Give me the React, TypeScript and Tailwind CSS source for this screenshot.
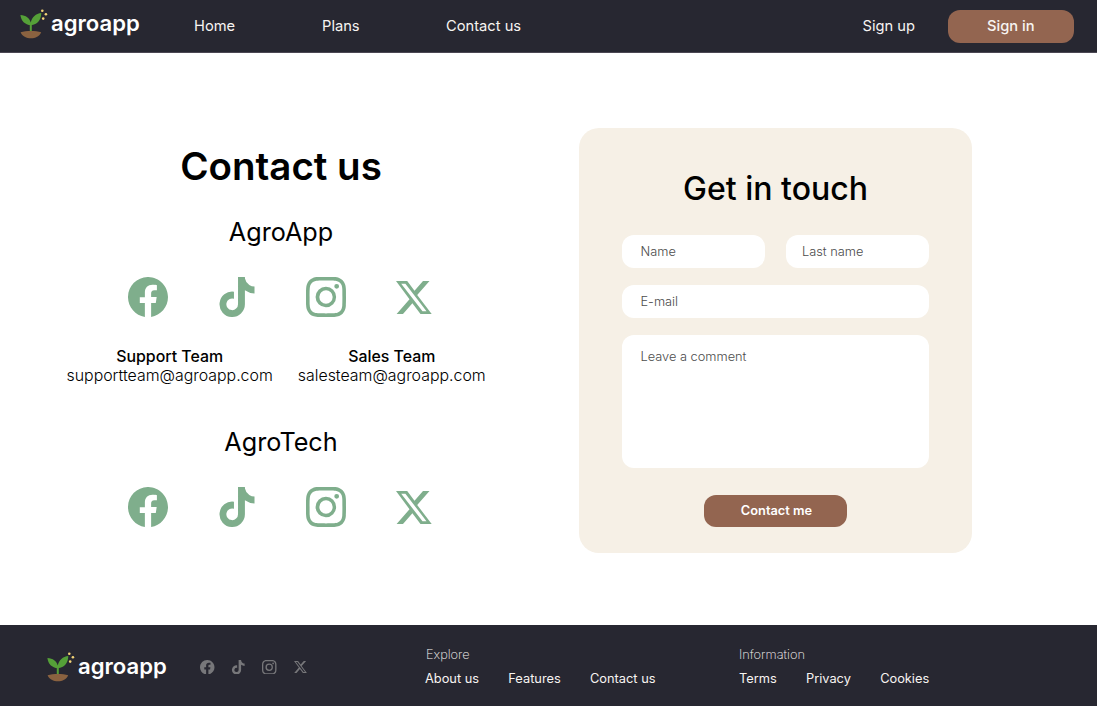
import { BsFacebook, BsInstagram } from "react-icons/bs";
import { FaTiktok } from "react-icons/fa6";

function Logo() {
  return (
    <div className="flex">
      <svg viewBox="0 0 28 30" className="mt-px h-[30px] w-[28px] shrink-0">
        <path d="M10.8 22.4V15" stroke="#55a038" strokeWidth="2" fill="none" />
        <path d="M10.9 16.2C5 15.6 1 11.8 .4 5.9c5.5 .3 9.2 3.1 10.4 7.6C12 8.2 15.8 4.5 21.3 4 21.2 10.9 17.4 15.8 10.9 16.2Z" fill="#55a038" />
        <path d="M.6 23.3C3.5 22.3 7 22 10.9 22S18.3 22.3 21.2 23.3C19.5 27.4 15.4 29.3 10.9 29.3S2.3 27.4 .6 23.3Z" fill="#8a6240" />
        <g fill="#f3d376">
          <circle cx="22.3" cy="1.7" r="1.3" />
          <circle cx="25.9" cy="5.2" r="1.3" />
          <circle cx="23.2" cy="9.6" r="1.3" />
        </g>
      </svg>
      <span className="ml-[3px] text-[22.1px] leading-[30px] font-semibold text-white">agroapp</span>
    </div>
  );
}

function XIcon({ className }: { className: string }) {
  return (
    <svg viewBox="0 0 36 33" fill="currentColor" className={className}>
      <path fillRule="evenodd" d="M0 0H11.2L18.5 9.8 27 0H33.5L21.2 14 35.7 33H24.5L16.4 22.15 7 33H.6L13.5 18.2ZM5.2 2.7 26.5 30.3H30.5L9.4 2.7Z" />
    </svg>
  );
}

function Socials() {
  return (
    <div className="ml-[128px] flex items-center text-[40px] text-[#7fae8c]">
      <BsFacebook />
      <FaTiktok className="ml-[49px]" />
      <BsInstagram className="ml-[48.5px]" />
      <XIcon className="ml-[50.5px] h-[33px] w-[36px]" />
    </div>
  );
}

const field = "h-[32.5px] rounded-[12px] bg-white text-[12.8px] font-light text-black outline-none placeholder:text-[#4c4c4c]";

export default function App() {
  return (
    <div className="flex h-[706px] w-[1097px] flex-col overflow-hidden bg-white font-['Inter',sans-serif] text-black">
      <header className="flex h-[53px] shrink-0 border-b border-[#4b4753] bg-[#272731] pl-5 text-[14.7px] text-[#f7f4f1]">
        <div className="w-[174px] pt-2"><Logo /></div>
        <nav className="flex pt-[14px] leading-6">
          <a className="w-[128px]">Home</a>
          <a className="w-[124px]">Plans</a>
          <a>Contact us</a>
        </nav>
        <div className="mr-[23.5px] ml-auto flex">
          <a className="mr-[33px] pt-[14px] leading-6">Sign up</a>
          <button className="mt-[10px] h-[32.5px] w-[125.5px] rounded-[12px] bg-[#936550] font-medium">Sign in</button>
        </div>
      </header>

      <main className="flex h-[572px] shrink-0">
        <section className="w-[579px]">
          <h1 className="mt-[89px] w-[562px] text-center text-[38.5px] leading-[48px] font-semibold">Contact us</h1>
          <h2 className="mt-[26px] w-[562px] text-center text-[25.2px] leading-8">AgroApp</h2>
          <div className="mt-[29px]"><Socials /></div>
          <div className="mt-[30px] ml-[66.5px] flex gap-[25px] text-center text-[15.9px] leading-5 font-light">
            <div>
              <h3 className="font-medium">Support Team</h3>
              <p className="-mt-px">supportteam@agroapp.com</p>
            </div>
            <div>
              <h3 className="font-medium">Sales Team</h3>
              <p className="-mt-px">salesteam@agroapp.com</p>
            </div>
          </div>
          <h2 className="mt-[40px] w-[562px] text-center text-[25.2px] leading-8">AgroTech</h2>
          <div className="mt-[29px]"><Socials /></div>
        </section>

        <form className="mt-[75px] flex h-[425px] w-[393px] flex-col rounded-[20px] bg-[#f6f0e6] px-[43px] pt-[41px]">
          <h2 className="text-center text-[32px] leading-10 font-medium">Get in touch</h2>
          <div className="mt-[26px] flex justify-between">
            <input className={`${field} w-[143px] pl-[18.5px]`} placeholder="Name" />
            <input className={`${field} w-[143px] pl-[16px]`} placeholder="Last name" />
          </div>
          <input className={`${field} mt-[17.5px] pl-[18.5px]`} placeholder="E-mail" />
          <textarea className={`${field} mt-[17px] h-[133px] resize-none pt-[12px] pl-[18.5px]`} placeholder="Leave a comment" />
          <button className="mt-[27px] h-[32.5px] w-[143px] self-center rounded-[12px] bg-[#936550] pl-[2px] text-[12.8px] font-semibold text-white">Contact me</button>
        </form>
      </main>

      <footer className="flex flex-1 bg-[#272731] pl-[47px] text-[12.8px] text-[#f7f4f1]">
        <div className="w-[153px] pt-[26px]"><Logo /></div>
        <div className="flex h-[84px] w-[225px] items-center text-[14.5px] text-[#77777a]">
          <BsFacebook />
          <FaTiktok className="ml-[16px]" />
          <BsInstagram className="ml-[17px]" />
          <XIcon className="ml-[17px] h-[12px] w-[13px]" />
        </div>
        <div className="w-[314px] pt-[21.5px] leading-4">
          <h4 className="pl-px font-extralight">Explore</h4>
          <div className="mt-2 flex gap-[29.3px]"><a>About us</a><a>Features</a><a>Contact us</a></div>
        </div>
        <div className="pt-[21.5px] leading-4">
          <h4 className="font-extralight">Information</h4>
          <div className="mt-2 flex gap-[29.3px]"><a>Terms</a><a>Privacy</a><a>Cookies</a></div>
        </div>
      </footer>
    </div>
  );
}
